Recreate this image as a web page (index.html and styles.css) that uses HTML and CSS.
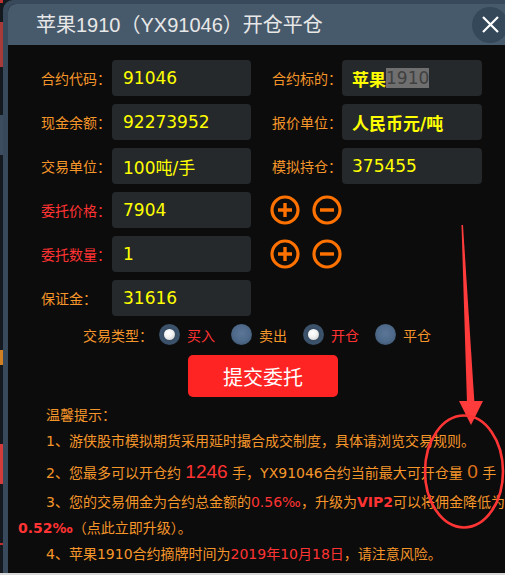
FILE: index.html
```html
<!DOCTYPE html>
<html lang="zh-CN">
<head>
<meta charset="utf-8">
<title>开仓平仓</title>
<link rel="stylesheet" href="styles.css">
</head>
<body>
<div class="screen">
  <div class="stage">
    <div class="backdrop"></div>
    <div class="modal">
      <div class="modal-inner">
        <header class="modal-head">
          <h1 class="title">苹果1910（YX91046）开仓平仓</h1>
          <button class="close" type="button" aria-label="关闭">
            <svg width="17" height="17" viewBox="0 0 17 17"><path d="M1 1L16 16M16 1L1 16" stroke="#ffffff" stroke-width="2.2" fill="none"/></svg>
          </button>
        </header>
        <div class="modal-body">
          <div class="form">
            <div class="row">
              <span class="label">合约代码：</span>
              <div class="field">91046</div>
              <span class="label label-r">合约标的：</span>
              <div class="field field-r"><b>苹果</b><span class="sel">1910</span></div>
            </div>
            <div class="row">
              <span class="label">现金余额：</span>
              <div class="field">92273952</div>
              <span class="label label-r">报价单位：</span>
              <div class="field field-r"><b>人民币元/吨</b></div>
            </div>
            <div class="row">
              <span class="label">交易单位：</span>
              <div class="field">100吨/手</div>
              <span class="label label-r">模拟持仓：</span>
              <div class="field field-r">375455</div>
            </div>
            <div class="row">
              <span class="label label-red">委托价格：</span>
              <div class="field">7904</div>
              <button class="step step-first" type="button" aria-label="加">
                <svg width="30" height="30" viewBox="0 0 30 30"><circle cx="15" cy="15" r="13" fill="none" stroke="#ff7200" stroke-width="3.2"/><path d="M8 15H22M15 8V22" stroke="#ff7200" stroke-width="3.4"/></svg>
              </button>
              <button class="step" type="button" aria-label="减">
                <svg width="30" height="30" viewBox="0 0 30 30"><circle cx="15" cy="15" r="13" fill="none" stroke="#ff7200" stroke-width="3.2"/><path d="M8 15H22" stroke="#ff7200" stroke-width="3.4"/></svg>
              </button>
            </div>
            <div class="row">
              <span class="label label-red">委托数量：</span>
              <div class="field">1</div>
              <button class="step step-first" type="button" aria-label="加">
                <svg width="30" height="30" viewBox="0 0 30 30"><circle cx="15" cy="15" r="13" fill="none" stroke="#ff7200" stroke-width="3.2"/><path d="M8 15H22M15 8V22" stroke="#ff7200" stroke-width="3.4"/></svg>
              </button>
              <button class="step" type="button" aria-label="减">
                <svg width="30" height="30" viewBox="0 0 30 30"><circle cx="15" cy="15" r="13" fill="none" stroke="#ff7200" stroke-width="3.2"/><path d="M8 15H22" stroke="#ff7200" stroke-width="3.4"/></svg>
              </button>
            </div>
            <div class="row">
              <span class="label">保证金：</span>
              <div class="field">31616</div>
            </div>
          </div>

          <div class="trade">
            <span class="trade-label">交易类型：</span>
            <span class="radio checked"></span><span class="opt opt-red">买入</span>
            <span class="radio"></span><span class="opt">卖出</span>
            <span class="radio checked"></span><span class="opt opt-red">开仓</span>
            <span class="radio"></span><span class="opt">平仓</span>
          </div>

          <button class="submit" type="button">提交委托</button>

          <div class="tips">
            <p>温馨提示：</p>
            <p>1、游侠股市模拟期货采用延时撮合成交制度，具体请浏览交易规则。</p>
            <p>2、您最多可以开仓约 <span class="big red">1246</span> 手，YX91046合约当前最大可开仓量 <span class="big zero">0</span> 手</p>
            <p>3、您的交易佣金为合约总金额的<span class="red">0.56‰</span>，升级为<b class="red">VIP2</b>可以将佣金降低为<br><b class="red">0.52‰</b>（点此立即升级）。</p>
            <p>4、苹果1910合约摘牌时间为<span class="red">2019年10月18日</span>，请注意风险。</p>
          </div>
        </div>
      </div>
    </div>
  </div>
  <div class="bottom-line"></div>
</div>
<svg class="annotation" width="505" height="575" viewBox="0 0 505 575">
  <polygon points="461.5,225 463,225 474.5,404 467,404" fill="#ff3b3b"/>
  <polygon points="459,401 483,401 471,425" fill="#ff3b3b"/>
  <ellipse cx="464" cy="471.5" rx="39" ry="56" fill="none" stroke="#ff3535" stroke-width="2.6"/>
</svg>
</body>
</html>
```

FILE: styles.css
```css
* {
  box-sizing: border-box;
  margin: 0;
  padding: 0;
}

html,
body {
  width: 505px;
  height: 575px;
  overflow: hidden;
  background: #14191f;
}

body {
  position: relative;
  font-family: "Noto Sans CJK SC", sans-serif;
}

.screen {
  width: 505px;
  height: 575px;
  display: flex;
  flex-direction: column;
  overflow: hidden;
}

.stage {
  display: flex;
  height: 573px;
  flex: none;
}

.backdrop {
  width: 3px;
  flex: none;
  background: linear-gradient(to bottom,
    #c03030 0 3px,
    #14191f 3px 22px,
    #a83a3a 22px 67px,
    #14191f 67px 115px,
    #3b4d5e 115px 155px,
    #14191f 155px 350px,
    #d08020 350px 365px,
    #14191f 365px 444px,
    #d43b3b 444px 484px,
    #14191f 484px 543px,
    #c03030 543px 545px,
    #14191f 545px 100%);
}

.modal {
  width: 540px;
  flex: none;
  display: flex;
  background: #37495b;
  padding: 4px 0 0 5px;
  border-top-left-radius: 10px;
}

.modal-inner {
  flex: 1;
  display: flex;
  flex-direction: column;
  background: #0c0c0c;
  border-top-left-radius: 8px;
  overflow: hidden;
}

.modal-head {
  height: 41px;
  flex: none;
  display: flex;
  align-items: center;
  padding-left: 28px;
  background: #475a6c;
}

.title {
  font-family: "Liberation Sans", "Noto Sans CJK SC", sans-serif;
  font-size: 20px;
  font-weight: normal;
  color: #e8e8e8;
  line-height: 1;
}

.close {
  margin-left: auto;
  margin-right: 35px;
  width: 36px;
  height: 36px;
  border: none;
  border-radius: 50%;
  background: #34485a;
  display: flex;
  align-items: center;
  justify-content: center;
}

.modal-body {
  flex: 1;
  padding-top: 15px;
}

.form {
  padding-left: 33px;
  display: flex;
  flex-direction: column;
  gap: 8px;
}

.row {
  display: flex;
  align-items: center;
  height: 36px;
}

.label {
  width: 71px;
  flex: none;
  font-size: 14px;
  color: #f5962a;
  white-space: nowrap;
}

.label-red {
  color: #ff3333;
}

.label-r {
  margin-left: 21px;
  width: 70px;
}

.field {
  width: 139px;
  height: 36px;
  flex: none;
  display: flex;
  align-items: center;
  padding-left: 11px;
  background: #26292c;
  border-radius: 4px;
  font-family: "DejaVu Sans", "Noto Sans CJK SC", sans-serif;
  font-size: 17px;
  color: #ffff00;
  white-space: nowrap;
}

.field-r {
  width: 140px;
  padding-left: 10px;
}

.field b {
  font-weight: bold;
}

.sel {
  background: #6f6f6f;
  color: #404040;
}

.step {
  width: 30px;
  height: 30px;
  border: none;
  background: transparent;
  display: flex;
  margin-left: 12px;
}

.step-first {
  margin-left: 19px;
}

.trade {
  display: flex;
  align-items: center;
  height: 21px;
  margin-top: 8px;
  padding-left: 75px;
  font-size: 14px;
  color: #f5962a;
}

.trade-label {
  margin-right: 6px;
}

.radio {
  width: 21px;
  height: 21px;
  flex: none;
  border-radius: 50%;
  margin-right: 7px;
  background: radial-gradient(circle at 50% 45%, #5b7797 0, #4d6888 55%, #33465b 100%);
  display: flex;
  align-items: center;
  justify-content: center;
}

.radio.checked {
  background: radial-gradient(circle at 50% 50%, #2f4256 0, #3c536c 60%, #2b3b4d 100%);
}

.radio.checked::after {
  content: "";
  width: 11px;
  height: 11px;
  border-radius: 50%;
  background: radial-gradient(circle at 40% 35%, #ffffff 0, #f2f2f2 45%, #bdbdbd 100%);
}

.opt {
  margin-right: 16px;
}

.opt-red {
  color: #ff3333;
}

.submit {
  display: block;
  margin-top: 10px;
  margin-left: 180px;
  width: 150px;
  height: 42px;
  border: none;
  border-radius: 5px;
  background: #ff2424;
  color: #ffffff;
  font-family: "Noto Sans CJK SC", sans-serif;
  font-size: 20px;
}

.tips {
  margin-top: 5px;
  padding-left: 10px;
  font-family: "DejaVu Sans", "Noto Sans CJK SC", sans-serif;
  font-size: 14px;
  line-height: 1.86;
  color: #f5962a;
  white-space: nowrap;
}

.tips p {
  text-indent: 28px;
}

.red {
  color: #ff3333;
}

.tips b {
  font-weight: bold;
}

.big {
  font-family: "Liberation Sans", sans-serif;
  font-size: 19px;
}

.zero {
  color: #e0741c;
}

.bottom-line {
  height: 2px;
  flex: none;
  background: #d9d9d9;
}

.annotation {
  position: absolute;
  left: 0;
  top: 0;
  pointer-events: none;
}
```
